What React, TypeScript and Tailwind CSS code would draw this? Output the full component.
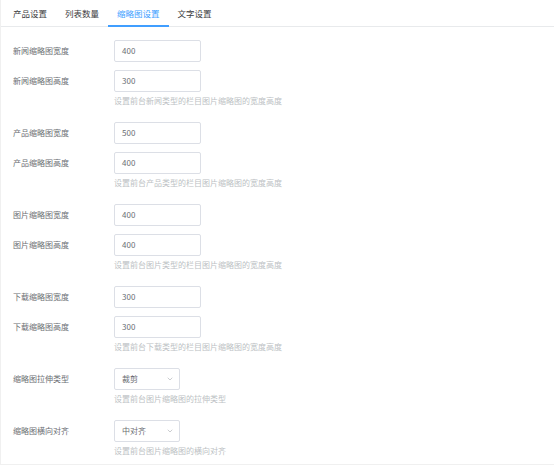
import React from 'react';
import { ChevronDown } from 'lucide-react';

const tabs = ['产品设置', '列表数量', '缩略图设置', '文字设置'];
const activeTab = 2;

type Field = { label: string; value: string; select?: boolean };
type Group = { fields: Field[]; hint: string };

const groups: Group[] = [
  {
    fields: [
      { label: '新闻缩略图宽度', value: '400' },
      { label: '新闻缩略图高度', value: '300' },
    ],
    hint: '设置前台新闻类型的栏目图片缩略图的宽度高度',
  },
  {
    fields: [
      { label: '产品缩略图宽度', value: '500' },
      { label: '产品缩略图高度', value: '400' },
    ],
    hint: '设置前台产品类型的栏目图片缩略图的宽度高度',
  },
  {
    fields: [
      { label: '图片缩略图宽度', value: '400' },
      { label: '图片缩略图高度', value: '400' },
    ],
    hint: '设置前台图片类型的栏目图片缩略图的宽度高度',
  },
  {
    fields: [
      { label: '下载缩略图宽度', value: '300' },
      { label: '下载缩略图高度', value: '300' },
    ],
    hint: '设置前台下载类型的栏目图片缩略图的宽度高度',
  },
  {
    fields: [{ label: '缩略图拉伸类型', value: '裁剪', select: true }],
    hint: '设置前台图片缩略图的拉伸类型',
  },
  {
    fields: [{ label: '缩略图横向对齐', value: '中对齐', select: true }],
    hint: '设置前台图片缩略图的横向对齐',
  },
];

const FieldRow: React.FC<{ field: Field }> = ({ field }) => (
  <div className="flex items-center h-[22px]">
    <label className="w-[101px] shrink-0 text-[8px] leading-[12px] text-[#6b6e73]">{field.label}</label>
    {field.select ? (
      <div className="w-[66px] h-[22px] rounded-[2px] border border-[#dcdfe6] bg-white flex items-center justify-between pl-[7px] pr-[5px]">
        <span className="text-[8px] leading-[12px] text-[#6b6e73]">{field.value}</span>
        <ChevronDown className="w-[8px] h-[8px] text-[#b0b3b8]" strokeWidth={2} />
      </div>
    ) : (
      <div className="w-[87px] h-[22px] rounded-[2px] border border-[#dcdfe6] bg-white flex items-center pl-[7px]">
        <span className="text-[8px] leading-[12px] text-[#6b6e73]">{field.value}</span>
      </div>
    )}
  </div>
);

export default function App() {
  return (
    <div
      className="w-[554px] h-[465px] bg-white border-b border-l border-[#f0f0f0] overflow-hidden"
      style={{ fontFamily: '"Noto Sans CJK SC", "Noto Sans", sans-serif' }}
    >
      <div className="flex h-[27px] border-b border-[#e8eaec] pl-[3px]">
        {tabs.map((t, i) => (
          <div
            key={t}
            className={`relative px-[9px] flex items-center text-[8.5px] leading-[12px] pb-[1px] ${
              i === activeTab ? 'text-[#409eff]' : 'text-[#3a3b3d]'
            }`}
          >
            {t}
            {i === activeTab && (
              <span className="absolute left-0 right-0 bottom-[-1px] h-[2px] bg-[#409eff]" />
            )}
          </div>
        ))}
      </div>

      <div className="pt-[13px] pl-[12px] flex flex-col">
        {groups.map((g, gi) => (
          <div key={gi} className="flex flex-col">
            <div className="flex flex-col gap-[8px]">
              {g.fields.map(f => (
                <FieldRow key={f.label} field={f} />
              ))}
            </div>
            <p className="mt-[3px] mb-[15px] ml-[101px] text-[8px] leading-[12px] text-[#bcbfc4]">{g.hint}</p>
          </div>
        ))}
      </div>
    </div>
  );
}
